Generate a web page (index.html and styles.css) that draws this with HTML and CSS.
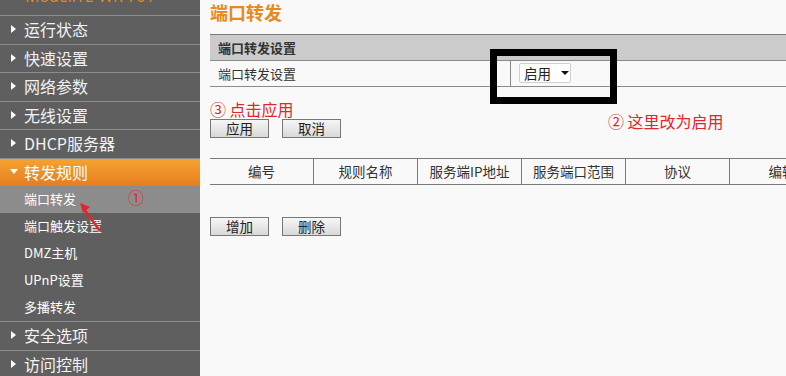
FILE: index.html
```html
<!DOCTYPE html>
<html lang="zh-CN">
<head>
<meta charset="utf-8">
<title>端口转发</title>
<link rel="stylesheet" href="styles.css">
</head>
<body>
<aside class="sidebar">
  <div class="model"><span>Model:TL-WR 701</span></div>
  <ul class="nav">
    <li class="nav-item"><span class="tri-right"></span>运行状态</li>
    <li class="nav-item"><span class="tri-right"></span>快速设置</li>
    <li class="nav-item"><span class="tri-right"></span>网络参数</li>
    <li class="nav-item"><span class="tri-right"></span>无线设置</li>
    <li class="nav-item"><span class="tri-right"></span>DHCP服务器</li>
    <li class="nav-item open"><span class="tri-down"></span>转发规则</li>
    <li class="sub-list">
      <div class="sub-item active">端口转发</div>
      <div class="sub-item">端口触发设置</div>
      <div class="sub-item">DMZ主机</div>
      <div class="sub-item">UPnP设置</div>
      <div class="sub-item">多播转发</div>
    </li>
    <li class="nav-item"><span class="tri-right"></span>安全选项</li>
    <li class="nav-item"><span class="tri-right"></span>访问控制</li>
  </ul>
  <span class="mark-one">①</span>
  <svg class="arrow" width="40" height="40" viewBox="0 0 40 40">
    <line x1="22" y1="32" x2="6" y2="10" stroke="#e3262b" stroke-width="2.5"/>
    <polygon points="2,4 12,8 5,14" fill="#e3262b"/>
  </svg>
</aside>
<main class="main">
  <h1 class="title">端口转发</h1>
  <div class="panel-head">端口转发设置</div>
  <div class="panel-row">
    <div class="row-label">端口转发设置</div>
    <div class="row-value">
      <div class="select">启用<span class="caret"></span></div>
    </div>
  </div>
  <div class="note">③ 点击应用</div>
  <div class="btns">
    <button class="btn">应用</button>
    <button class="btn">取消</button>
  </div>
  <div class="table-head">
    <div class="th">编号</div>
    <div class="th">规则名称</div>
    <div class="th">服务端IP地址</div>
    <div class="th">服务端口范围</div>
    <div class="th">协议</div>
    <div class="th">编辑</div>
  </div>
  <div class="btns btns-low">
    <button class="btn">增加</button>
    <button class="btn">删除</button>
  </div>
  <div class="hl-box"></div>
  <div class="note note-two">② 这里改为启用</div>
</main>
</body>
</html>
```
FILE: styles.css
```css
* { box-sizing: border-box; }
html, body { margin: 0; padding: 0; }
body {
  display: flex;
  width: 786px;
  height: 376px;
  overflow: hidden;
  font-family: "Noto Sans CJK SC", "Noto Sans", sans-serif;
  background: #f9f9f9;
}
.sidebar {
  position: relative;
  width: 200px;
  flex-shrink: 0;
  background: #5f5f5f;
  color: #f2f2f2;
}
.model {
  height: 16px;
  overflow: hidden;
  border-bottom: 1px solid #8c8c8c;
  padding-left: 25px;
}
.model span {
  display: block;
  margin-top: -12px;
  font-size: 16px;
  line-height: 16px;
  color: #e8891c;
  font-family: "Open Sans", sans-serif;
}
.nav { list-style: none; margin: 0; padding: 0; }
.nav-item {
  display: flex;
  align-items: center;
  height: 28.5px;
  border-bottom: 1px solid #8c8c8c;
  padding-left: 11px;
  padding-bottom: 1px;
  font-size: 16px;
  line-height: 20px;
}
.nav-item.open {
  height: 27.5px;
  border-bottom: none;
  background: linear-gradient(#f3a332, #e77d1f);
  color: #fff;
}
.tri-right {
  width: 0; height: 0;
  border-top: 4px solid transparent;
  border-bottom: 4px solid transparent;
  border-left: 5px solid #fff;
  margin-right: 8px;
}
.tri-down {
  width: 0; height: 0;
  border-left: 4px solid transparent;
  border-right: 4px solid transparent;
  border-top: 5px solid #fff;
  margin-right: 6px;
  margin-left: -1px;
}
.sub-list { border-bottom: 1px solid #8c8c8c; }
.sub-item {
  height: 27px;
  line-height: 26px;
  padding-left: 24px;
  font-size: 13px;
  color: #fff;
}
.sub-item.active { background: #8c8c8c; }
.mark-one {
  position: absolute;
  left: 128px;
  top: 188px;
  font-size: 16px;
  line-height: 18px;
  color: #e3262b;
}
.arrow {
  position: absolute;
  left: 78px;
  top: 199px;
}
.main {
  position: relative;
  flex: 1;
  min-width: 0;
  padding-left: 10px;
  overflow: hidden;
  color: #333;
}
.title {
  margin: 0;
  font-size: 18px;
  line-height: 24px;
  font-weight: bold;
  color: #e8891c;
}
.panel-head {
  margin-top: 10px;
  height: 27px;
  border-top: 1px solid #7a7a7a;
  border-bottom: 1px solid #8a8a8a;
  background: #cbcbcb;
  padding-left: 8px;
  font-size: 13px;
  font-weight: bold;
  line-height: 25px;
  color: #333;
}
.panel-row {
  display: flex;
  height: 26px;
  border-bottom: 1px solid #8a8a8a;
  font-size: 13px;
  line-height: 25px;
}
.row-label {
  width: 301px;
  padding-left: 8px;
  border-right: 1px solid #8a8a8a;
}
.row-value {
  padding-left: 8px;
  padding-top: 2px;
}
.select {
  display: flex;
  align-items: center;
  width: 52px;
  height: 20px;
  border: 1px solid #d0d0d0;
  border-radius: 2px;
  background: #fff;
  padding-left: 4px;
  font-size: 13.5px;
  line-height: 18px;
  color: #222;
}
.caret {
  width: 0; height: 0;
  margin-left: 10px;
  border-left: 4px solid transparent;
  border-right: 4px solid transparent;
  border-top: 4px solid #111;
}
.note {
  margin-top: 14px;
  font-size: 16px;
  line-height: 16px;
  color: #e3262b;
}
.btns {
  display: flex;
  gap: 13px;
  margin-top: 2px;
}
.btns-low { margin-top: 32px; }
.btn {
  width: 59px;
  height: 19px;
  padding: 0;
  border: 1px solid #777;
  background: linear-gradient(#f6f6f6, #d9d9d9);
  font-family: "Noto Sans CJK SC", sans-serif;
  font-size: 13.5px;
  line-height: 17px;
  color: #222;
}
.table-head {
  display: flex;
  margin-top: 20px;
  height: 27px;
  border-top: 1px solid #7a7a7a;
  border-bottom: 1px solid #7a7a7a;
}
.th {
  flex: 0 0 104px;
  text-align: center;
  font-size: 13.5px;
  line-height: 25px;
  color: #333;
  border-right: 1px solid #7a7a7a;
}
.th:last-child { border-right: none; }
.hl-box {
  position: absolute;
  left: 290px;
  top: 49px;
  width: 127px;
  height: 55px;
  border: 7px solid #000;
}
.note-two {
  position: absolute;
  left: 408px;
  top: 113px;
  margin: 0;
}
```
